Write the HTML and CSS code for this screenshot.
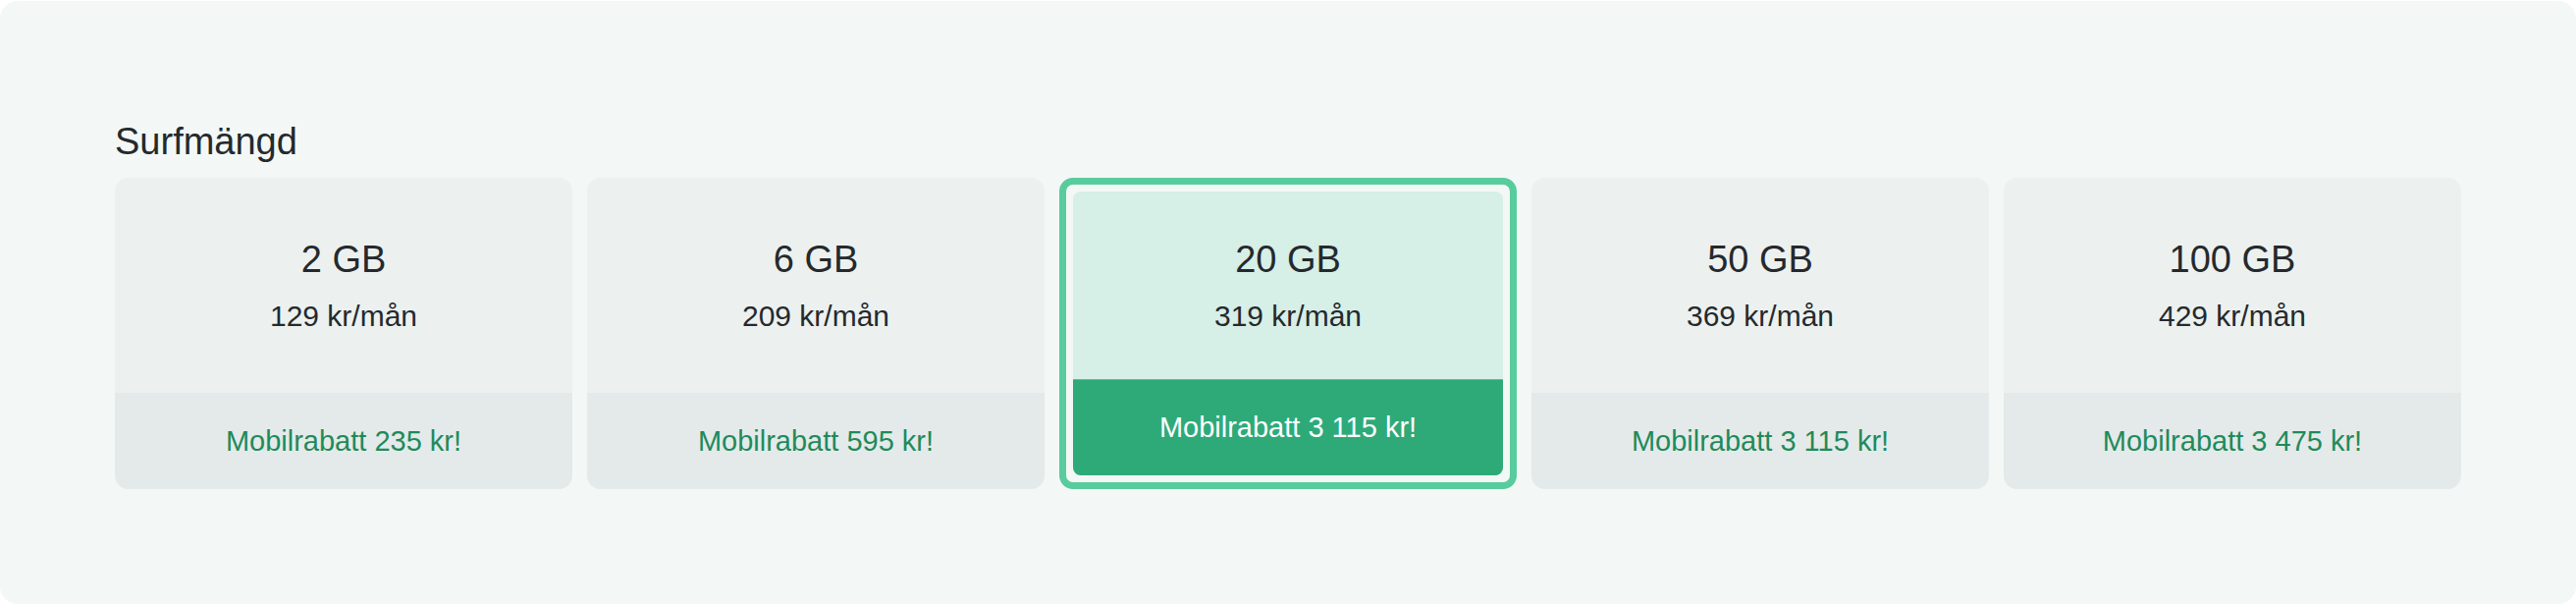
FILE: index.html
```html
<!DOCTYPE html>
<html lang="sv">
<head>
<meta charset="utf-8">
<title>Surfmängd</title>
<link rel="stylesheet" href="styles.css">
</head>
<body>
<section class="panel">
  <h2 class="title">Surfmängd</h2>
  <div class="options">
    <div class="card">
      <div class="card-inner">
        <div class="card-main">
          <div class="amount">2 GB</div>
          <div class="price">129 kr/mån</div>
        </div>
        <div class="card-foot">Mobilrabatt 235 kr!</div>
      </div>
    </div>
    <div class="card">
      <div class="card-inner">
        <div class="card-main">
          <div class="amount">6 GB</div>
          <div class="price">209 kr/mån</div>
        </div>
        <div class="card-foot">Mobilrabatt 595 kr!</div>
      </div>
    </div>
    <div class="card selected">
      <div class="card-inner">
        <div class="card-main">
          <div class="amount">20 GB</div>
          <div class="price">319 kr/mån</div>
        </div>
        <div class="card-foot">Mobilrabatt 3 115 kr!</div>
      </div>
    </div>
    <div class="card">
      <div class="card-inner">
        <div class="card-main">
          <div class="amount">50 GB</div>
          <div class="price">369 kr/mån</div>
        </div>
        <div class="card-foot">Mobilrabatt 3 115 kr!</div>
      </div>
    </div>
    <div class="card">
      <div class="card-inner">
        <div class="card-main">
          <div class="amount">100 GB</div>
          <div class="price">429 kr/mån</div>
        </div>
        <div class="card-foot">Mobilrabatt 3 475 kr!</div>
      </div>
    </div>
  </div>
</section>
</body>
</html>
```

FILE: styles.css
```css
* { box-sizing: border-box; }

html, body {
  margin: 0;
  padding: 0;
  background: #ffffff;
}

body {
  font-family: "Liberation Sans", Arial, sans-serif;
  color: #25292d;
}

.panel {
  margin-top: 1px;
  height: 614px;
  background: #f3f8f6;
  border-radius: 18px;
  padding: 120px 117px 0;
}

.title {
  margin: 0 0 14px;
  font-size: 38px;
  line-height: 46px;
  font-weight: 400;
  color: #25292d;
}

.options {
  display: grid;
  grid-template-columns: repeat(5, 1fr);
  gap: 15px;
}

.card {
  height: 317px;
  border-radius: 14px;
  display: flex;
}

.card-inner {
  flex: 1;
  display: flex;
  flex-direction: column;
  border-radius: 14px;
  overflow: hidden;
  background: #ecf1ef;
}

.card-main {
  flex: 1;
  display: flex;
  flex-direction: column;
  align-items: center;
  justify-content: center;
}

.amount {
  font-size: 38px;
  line-height: 44px;
  color: #25292d;
}

.price {
  margin-top: 18px;
  font-size: 30px;
  line-height: 36px;
  color: #25292d;
}

.card-foot {
  height: 98px;
  line-height: 98px;
  text-align: center;
  font-size: 29px;
  background: #e4eaea;
  color: #1f8a5b;
}

.card.selected {
  border: 7px solid #58cc9d;
  padding: 7px;
  border-radius: 14px;
}

.card.selected .card-inner {
  border-radius: 8px;
  background: #d6efe7;
}

.card.selected .card-foot {
  height: 98px;
  background: #2eaa79;
  color: #ffffff;
  border-top: 1px solid #4cc291;
  line-height: 96px;
}
```
